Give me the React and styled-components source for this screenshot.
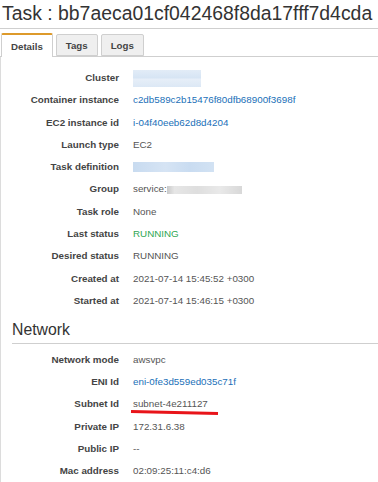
import React from "react";
import styled, { createGlobalStyle } from "styled-components";

const Global = createGlobalStyle`
  html, body { margin: 0; padding: 0; background: #fff; }
  body { font-family: "Liberation Sans", Arial, sans-serif; color: #444; }
`;

const Page = styled.div`
  width: 378px;
  overflow: hidden;
`;

const Title = styled.h1`
  margin: 1px 0 0 0;
  padding: 0 0 3px 2px;
  font-size: 19.4px;
  line-height: 24px;
  font-weight: normal;
  color: #333;
  white-space: nowrap;
  border-bottom: 1px solid #cfcfcf;
`;

const TabBar = styled.div`
  display: flex;
  align-items: flex-end;
  gap: 3px;
  margin-top: 4px;
  padding-left: 1px;
  border-bottom: 1px solid #cfcfcf;
`;

const Tab = styled.div`
  box-sizing: border-box;
  height: ${(p) => (p.$active ? "24px" : "22px")};
  margin-bottom: ${(p) => (p.$active ? "-1px" : "0")};
  padding: 0 9px;
  display: flex;
  align-items: center;
  font-size: 9.7px;
  font-weight: bold;
  color: #444;
  background: ${(p) => (p.$active ? "#fff" : "#efefef")};
  border: 1px solid #cfcfcf;
  border-bottom: ${(p) => (p.$active ? "none" : "1px solid #cfcfcf")};
  border-top: ${(p) => (p.$active ? "2px solid #dd9a2b" : "1px solid #cfcfcf")};
  border-radius: 2px 2px 0 0;
`;

const Panel = styled.div`
  border-left: 1px solid #dcdcdc;
  padding-top: 10px;
  padding-bottom: 10px;
`;

const Rows = styled.div`
  display: flex;
  flex-direction: column;
`;

const Row = styled.div`
  display: grid;
  grid-template-columns: 118px 1fr;
  column-gap: 14px;
  height: 22.3px;
  align-items: center;
  font-size: 9.8px;
  line-height: 22.3px;
`;

const Label = styled.div`
  text-align: right;
  font-weight: bold;
  color: #444;
  white-space: nowrap;
`;

const Value = styled.div`
  position: relative;
  color: ${(p) =>
    p.$tone === "link" ? "#1a6fb8" : p.$tone === "ok" ? "#2fa653" : "#555"};
  white-space: nowrap;
  display: flex;
  align-items: center;
`;

const Blur = styled.span`
  display: inline-block;
  width: ${(p) => p.$w}px;
  height: ${(p) => p.$h}px;
  background: ${(p) => p.$bg};
  filter: blur(0.6px);
`;

const SectionTitle = styled.h2`
  margin: 7.6px 0 4.5px 11px;
  padding-bottom: 3.5px;
  font-size: 15.8px;
  line-height: 20px;
  font-weight: normal;
  color: #333;
  border-bottom: 1px solid #cfcfcf;
`;

const Underline = styled.svg`
  position: absolute;
  left: -3px;
  top: 16.5px;
  width: 90px;
  height: 6px;
  overflow: visible;
`;

const taskRows = [
  { label: "Cluster", blur: { w: 68, h: 17, bg: "linear-gradient(180deg,#e2ecf7 0%,#d7e5f4 45%,#e6eef8 55%,#dce8f5 100%)" } },
  { label: "Container instance", value: "c2db589c2b15476f80dfb68900f3698f", tone: "link" },
  { label: "EC2 instance id", value: "i-04f40eeb62d8d4204", tone: "link" },
  { label: "Launch type", value: "EC2" },
  { label: "Task definition", blur: { w: 81, h: 10, bg: "linear-gradient(90deg,#c8dbf0,#d6e4f4 40%,#c9dcf1 70%,#d2e2f3)" } },
  { label: "Group", value: "service:", group: true },
  { label: "Task role", value: "None" },
  { label: "Last status", value: "RUNNING", tone: "ok" },
  { label: "Desired status", value: "RUNNING" },
  { label: "Created at", value: "2021-07-14 15:45:52 +0300" },
  { label: "Started at", value: "2021-07-14 15:46:15 +0300" },
];

const netRows = [
  { label: "Network mode", value: "awsvpc" },
  { label: "ENI Id", value: "eni-0fe3d559ed035c71f", tone: "link" },
  { label: "Subnet Id", value: "subnet-4e211127", mark: true },
  { label: "Private IP", value: "172.31.6.38" },
  { label: "Public IP", value: "--" },
  { label: "Mac address", value: "02:09:25:11:c4:d6" },
];

function DetailRow({ r }) {
  return (
    <Row>
      <Label>{r.label}</Label>
      <Value $tone={r.tone}>
        {r.blur ? <Blur $w={r.blur.w} $h={r.blur.h} $bg={r.blur.bg} /> : r.value}
        {r.group && (
          <Blur $w={75} $h={8} $bg="linear-gradient(90deg,#c9c9c9 0%,#e6e6e6 10%,#dedede 40%,#e9e9e9 70%,#d8d8d8 100%)" />
        )}
        {r.mark && (
          <Underline viewBox="0 0 90 6">
            <path d="M1 1.4 L88 3.4" stroke="#e8141a" strokeWidth="3" fill="none" />
          </Underline>
        )}
      </Value>
    </Row>
  );
}

export default function App() {
  return (
    <Page>
      <Global />
      <Title>Task : bb7aeca01cf042468f8da17fff7d4cda</Title>
      <TabBar>
        <Tab $active>Details</Tab>
        <Tab>Tags</Tab>
        <Tab>Logs</Tab>
      </TabBar>
      <Panel>
        <Rows>
          {taskRows.map((r) => (
            <DetailRow key={r.label} r={r} />
          ))}
        </Rows>
        <SectionTitle>Network</SectionTitle>
        <Rows>
          {netRows.map((r) => (
            <DetailRow key={r.label} r={r} />
          ))}
        </Rows>
      </Panel>
    </Page>
  );
}
